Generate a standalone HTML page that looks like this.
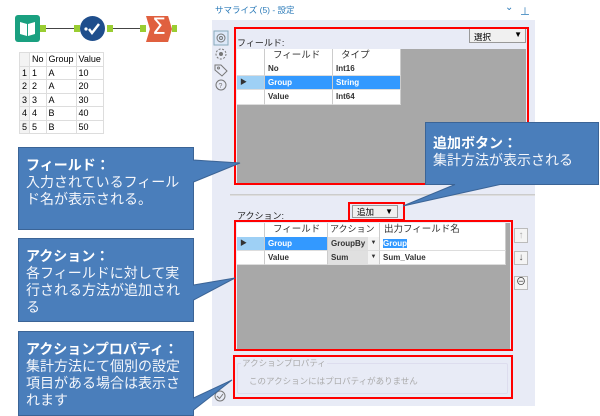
<!DOCTYPE html>
<html><head><meta charset="utf-8"><style>
*{margin:0;padding:0;box-sizing:border-box}
body{width:600px;height:416px;position:relative;overflow:hidden;background:#fff;font-family:"Liberation Sans","Noto Sans CJK JP",sans-serif;}
.a{position:absolute}
.t{font-size:9px;color:#222}
table.d{border-collapse:collapse;font-size:9px;position:absolute}
table.d td{border:1px solid #ddd;padding:0 2px;height:13.5px}
.g{background:#a8a8a8}
.hd{background:#fff;font-size:9.5px;color:#333;position:absolute;border-right:1px solid #ccc;padding-left:8px;line-height:13px;white-space:nowrap;overflow:hidden}
.c{position:absolute;background:#fff;font-size:8px;font-weight:bold;color:#333;line-height:13px;padding-left:3px;border-right:1px solid #ccc;border-bottom:1px solid #ddd}
.sel{background:#3399ff;color:#fff}
.red{position:absolute;border:2px solid #f00}
.co{position:absolute;color:#f4f6fb;font-size:14px;line-height:17px;padding:6px 0 0 8px;white-space:nowrap}
.co b{display:block;color:#fff}
</style></head><body>
<!-- workflow -->
<div class="a" style="left:15px;top:15px;width:25px;height:27px;background:#1aa080;border-radius:3px"></div>
<svg class="a" style="left:15px;top:15px" width="25" height="27"><path d="M5 7 L12 9 L12 21 L5 19Z M13 9 L20 7 L20 19 L13 21Z" fill="#fff"/></svg>
<div class="a" style="left:40px;top:25px;width:6px;height:7px;background:#9acd32"></div>
<div class="a" style="left:46px;top:28px;width:30px;height:1px;background:#444"></div>
<div class="a" style="left:74px;top:25px;width:6px;height:7px;background:#9acd32"></div>
<div class="a" style="left:80px;top:16px;width:25px;height:25px;background:#1f4e8c;border-radius:50%"></div>
<svg class="a" style="left:80px;top:16px" width="25" height="25"><circle cx="6" cy="13" r="1.6" fill="#fff"/><path d="M9 13 L12 17 L19 8" stroke="#fff" stroke-width="2.5" fill="none"/></svg>
<div class="a" style="left:107px;top:25px;width:6px;height:7px;background:#9acd32"></div>
<div class="a" style="left:113px;top:28px;width:28px;height:1px;background:#444"></div>
<div class="a" style="left:140px;top:25px;width:6px;height:7px;background:#9acd32"></div>
<div class="a" style="left:146px;top:16px;width:26px;height:26px;background:#e0603f;clip-path:polygon(0 0,85% 0,100% 50%,85% 100%,0 100%,15% 50%)"></div>
<div class="a" style="left:152px;top:14px;color:#fff;font-size:22px;line-height:28px;font-family:'DejaVu Sans',sans-serif">Σ</div>
<div class="a" style="left:172px;top:25px;width:5px;height:7px;background:#9acd32"></div>
<table class="d" style="left:19px;top:52px;width:84px">
<tr style="background:#fff"><td style="width:13px;background:#f3f3f3"></td><td style="width:13px">No</td><td>Group</td><td>Value</td></tr>
<tr><td style="background:#f3f3f3">1</td><td>1</td><td>A</td><td>10</td></tr>
<tr><td style="background:#f3f3f3">2</td><td>2</td><td>A</td><td>20</td></tr>
<tr><td style="background:#f3f3f3">3</td><td>3</td><td>A</td><td>30</td></tr>
<tr><td style="background:#f3f3f3">4</td><td>4</td><td>B</td><td>40</td></tr>
<tr><td style="background:#f3f3f3">5</td><td>5</td><td>B</td><td>50</td></tr>
</table>
<!-- panel -->
<div class="a" style="left:215px;top:4px;font-size:8.5px;color:#2a7ab8">サマライズ (5) - 設定</div>
<div class="a" style="left:505px;top:2px;font-size:10px;color:#2a7ab8">⌄</div>
<div class="a" style="left:520px;top:3px;font-size:10px;color:#2a7ab8">⊥</div>
<div class="a" style="left:212px;top:20px;width:323px;height:386px;background:#e8ebf6"></div>
<svg class="a" style="left:212px;top:28px" width="20" height="380" fill="none" stroke="#777" stroke-width="1">
<rect x="2" y="3" width="14" height="14" stroke="#8ab" fill="#dde8f8"/><circle cx="9" cy="10" r="4"/><circle cx="9" cy="10" r="1.5"/>
<circle cx="9" cy="26" r="5" stroke-dasharray="2 1.5"/><circle cx="9" cy="26" r="1.5" fill="#777"/>
<path d="M3 37 L9 37 L15 43 L10 48 L3 42Z"/><circle cx="6.5" cy="40" r="1"/>
<circle cx="9" cy="57" r="5"/><text x="6.5" y="60" font-size="7" fill="#777" stroke="none">?</text>
<circle cx="8" cy="368" r="5"/><path d="M5 368 L7.5 370.5 L11 366"/>
</svg>
<div class="a t" style="left:237px;top:36px">フィールド:</div>
<div class="a" style="left:469px;top:28px;width:57px;height:15px;background:#f0f0f0;border:1px solid #999;font-size:8.5px;padding:2px 0 0 4px">選択<span style="position:absolute;right:3px;top:1px;font-size:8px">▼</span></div>
<div class="a g" style="left:237px;top:49px;width:289px;height:134px"></div>
<div class="hd" style="left:237px;top:49px;width:28px;height:13px"></div>
<div class="hd" style="left:265px;top:49px;width:68px;height:13px">フィールド</div>
<div class="hd" style="left:333px;top:49px;width:68px;height:13px">タイプ</div>
<div class="c" style="left:237px;top:62px;width:28px;height:14px;background:#fff"></div>
<div class="c" style="left:265px;top:62px;width:68px;height:14px">No</div>
<div class="c" style="left:333px;top:62px;width:68px;height:14px">Int16</div>
<div class="c" style="left:237px;top:76px;width:28px;height:14px;background:#9ed0f5;font-size:7px">▶</div>
<div class="c sel" style="left:265px;top:76px;width:68px;height:14px">Group</div>
<div class="c sel" style="left:333px;top:76px;width:68px;height:14px">String</div>
<div class="c" style="left:237px;top:90px;width:28px;height:15px"></div>
<div class="c" style="left:265px;top:90px;width:68px;height:15px">Value</div>
<div class="c" style="left:333px;top:90px;width:68px;height:15px">Int64</div>
<div class="red" style="left:234px;top:27px;width:295px;height:158px"></div>
<div class="a" style="left:230px;top:194px;width:305px;height:2px;border-top:1px solid #ccc;border-bottom:1px solid #ddd"></div>
<div class="a t" style="left:237px;top:209px">アクション:</div>
<div class="a" style="left:352px;top:205px;width:46px;height:13px;background:#f0f0f0;border:1px solid #999;font-size:8.5px;padding:0 0 0 4px;line-height:12px">追加<span style="position:absolute;right:4px;top:0;font-size:8px">▼</span></div>
<div class="red" style="left:348px;top:202px;width:57px;height:19px"></div>
<div class="a g" style="left:237px;top:223px;width:273px;height:126px"></div>
<div class="hd" style="left:237px;top:223px;width:28px;height:14px"></div>
<div class="hd" style="left:265px;top:223px;width:63px;height:14px">フィールド</div>
<div class="hd" style="left:328px;top:223px;width:52px;height:14px;padding-left:2px;font-size:9px">アクション</div>
<div class="hd" style="left:380px;top:223px;width:126px;height:14px;padding-left:4px">出力フィールド名</div>
<div class="c" style="left:237px;top:237px;width:28px;height:14px;background:#9ed0f5;font-size:7px">▶</div>
<div class="c sel" style="left:265px;top:237px;width:63px;height:14px">Group</div>
<div class="c" style="left:328px;top:237px;width:52px;height:14px;background:#e0e0e0">GroupBy<span style="position:absolute;right:0;top:0;width:11px;height:13px;background:#f3f3f3;font-size:6px;text-align:center">▼</span></div>
<div class="c" style="left:380px;top:237px;width:126px;height:14px"><span style="background:#3399ff;color:#fff">Group</span></div>
<div class="c" style="left:237px;top:251px;width:28px;height:14px"></div>
<div class="c" style="left:265px;top:251px;width:63px;height:14px">Value</div>
<div class="c" style="left:328px;top:251px;width:52px;height:14px;background:#e0e0e0">Sum<span style="position:absolute;right:0;top:0;width:11px;height:13px;background:#f3f3f3;font-size:6px;text-align:center">▼</span></div>
<div class="c" style="left:380px;top:251px;width:126px;height:14px">Sum_Value</div>
<div class="red" style="left:234px;top:220px;width:279px;height:131px"></div>
<div class="a" style="left:514px;top:228px;width:14px;height:15px;border:1px solid #bbb;background:#f4f4f4;color:#aaa;font-size:10px;text-align:center;line-height:13px">↑</div>
<div class="a" style="left:514px;top:251px;width:14px;height:14px;border:1px solid #bbb;background:#f4f4f4;color:#555;font-size:10px;text-align:center;line-height:12px">↓</div>
<div class="a" style="left:514px;top:276px;width:14px;height:14px;border:1px solid #bbb;background:#f4f4f4;color:#333;font-size:10px;text-align:center;line-height:12px">⊖</div>
<div class="a" style="left:237px;top:363px;width:271px;height:31px;border:1px solid #dde;border-radius:2px"></div>
<div class="a" style="left:241px;top:357px;font-size:8.5px;color:#aaa;background:#e8ebf6;padding:0 1px">アクションプロパティ</div>
<div class="a" style="left:249px;top:375px;font-size:8.5px;color:#aaa">このアクションにはプロパティがありません</div>
<div class="red" style="left:233px;top:355px;width:280px;height:44px"></div>
<!-- callouts -->
<svg class="a" style="left:0;top:0" width="600" height="416">
<g fill="#4a7ebb" stroke="#3b6496" stroke-width="1">
<path d="M18.5 147.5 H193.5 V160 L240 163 L193.5 182 V229.5 H18.5Z"/>
<path d="M18.5 238.5 H193.5 V285 L235 278 L193.5 300 V321.5 H18.5Z"/>
<path d="M18.5 331.5 H193.5 V398 L232 380 L193.5 410 V415.5 H18.5Z"/>
<path d="M425.5 122.5 H598.5 V184.5 H500 L403 206 L455 184.5 H425.5Z"/>
</g></svg>
<div class="co" style="left:18px;top:151px"><b>フィールド：</b>入力されているフィール<br>ド名が表示される。</div>
<div class="co" style="left:18px;top:242px"><b>アクション：</b>各フィールドに対して実<br>行される方法が追加され<br>る</div>
<div class="co" style="left:18px;top:335px"><b>アクションプロパティ：</b>集計方法にて個別の設定<br>項目がある場合は表示さ<br>れます</div>
<div class="co" style="left:425px;top:129px"><b>追加ボタン：</b>集計方法が表示される</div>
</body></html>
